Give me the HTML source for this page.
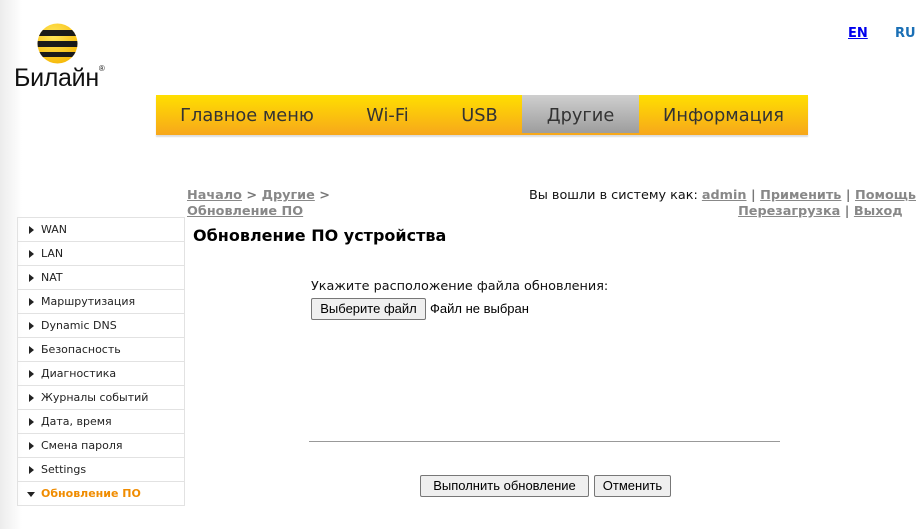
<!DOCTYPE html><html><head><meta charset="utf-8"><style>
body{margin:0;width:921px;height:529px;position:relative;background:#fff;font-family:"DejaVu Sans","Liberation Sans",sans-serif;overflow:hidden}
.lg{position:absolute;left:0;top:0;width:22px;height:529px;background:linear-gradient(90deg,#ececec,#fff)}
.a{position:absolute}
.menu{left:156px;top:95px;width:652px;height:40px;background:linear-gradient(#ffdf00,#f7a71b);box-shadow:0 2px 1px #ddd}
.tab{position:absolute;top:0;height:40px;line-height:42px;text-align:center;font-size:17.8px;color:#333}
.side{left:17px;top:217px;width:166px;border:1px solid #e2e2e2;border-bottom:none}
.side div{height:23px;border-bottom:1px solid #e2e2e2;font-size:11px;line-height:23px;color:#222;padding-left:23px;position:relative}
.side div:before{content:"";position:absolute;left:11px;top:8px;border-left:5px solid #222;border-top:4px solid transparent;border-bottom:4px solid transparent}
.side div.on{color:#f08c00;font-weight:bold}
.side div.on:before{left:9px;top:10px;border-top:5px solid #222;border-left:4px solid transparent;border-right:4px solid transparent;border-bottom:none}
.bc{font-size:12.8px;font-weight:bold;color:#777}
.bc u{color:#888}
.btn{position:absolute;font-family:"Liberation Sans",sans-serif;font-size:13px;background:#efefef;border:1px solid #777;border-radius:2px;height:20px;line-height:20px;text-align:center;color:#000}
</style></head><body>
<div class="lg"></div>
<svg class="a" style="left:37px;top:23px" width="41" height="41" viewBox="0 0 41 41"><defs><clipPath id="c"><circle cx="20.5" cy="20.5" r="20"/></clipPath><radialGradient id="g" cx=".4" cy=".3" r=".8"><stop offset="0" stop-color="#ffe65a"/><stop offset="1" stop-color="#f5b400"/></radialGradient></defs><g clip-path="url(#c)"><rect width="41" height="41" fill="url(#g)"/><rect y="7" width="41" height="6" fill="#1a1a1a"/><rect y="18" width="41" height="6" fill="#1a1a1a"/><rect y="29" width="41" height="5" fill="#1a1a1a"/></g></svg>
<div class="a" style="left:14px;top:64px;font-size:25px;font-family:'Liberation Sans',sans-serif;color:#111;letter-spacing:-0.3px">Билайн<span style="font-size:8px;vertical-align:top">®</span></div>
<div class="a" style="left:848px;top:26px;font-size:13px;font-weight:bold;color:#0000ee;text-decoration:underline">EN</div>
<div class="a" style="left:895px;top:26px;font-size:13px;font-weight:bold;color:#1a6fb5">RU</div>
<div class="a menu">
<div class="tab" style="left:0;width:182px">Главное меню</div>
<div class="tab" style="left:182px;width:99px">Wi-Fi</div>
<div class="tab" style="left:281px;width:85px">USB</div>
<div class="tab" style="left:366px;width:117px;background:linear-gradient(#cfcfcf,#9d9d9d);height:38px">Другие</div>
<div class="tab" style="left:483px;width:169px">Информация</div>
</div>
<div class="a bc" style="left:187px;top:188px;line-height:16px"><u>Начало</u> &gt; <u>Другие</u> &gt;<br><u>Обновление ПО</u></div>
<div class="a bc" style="right:5px;top:188px;line-height:16px;text-align:right"><span style="color:#111;font-weight:normal">Вы вошли в систему как: </span><u>admin</u> | <u>Применить</u> | <u>Помощь</u><br><u>Перезагрузка</u> | <u>Выход</u>&nbsp;&nbsp;&nbsp;</div>
<div class="a" style="left:193px;top:226px;font-size:16px;font-weight:bold;color:#000">Обновление ПО устройства</div>
<div class="a side">
<div>WAN</div><div>LAN</div><div>NAT</div><div>Маршрутизация</div><div>Dynamic DNS</div><div>Безопасность</div><div>Диагностика</div><div>Журналы событий</div><div>Дата, время</div><div>Смена пароля</div><div>Settings</div><div class="on">Обновление ПО</div>
</div>
<div class="a" style="left:311px;top:279px;font-size:12.8px;font-family:'DejaVu Sans',sans-serif;color:#111">Укажите расположение файла обновления:</div>
<div class="btn" style="left:311px;top:298px;width:113px">Выберите файл</div>
<div class="a" style="left:430px;top:301px;font-size:13px;font-family:'Liberation Sans',sans-serif">Файл не выбран</div>
<div class="a" style="left:309px;top:441px;width:471px;height:1px;background:#999"></div>
<div class="btn" style="left:420px;top:475px;width:167px">Выполнить обновление</div>
<div class="btn" style="left:594px;top:475px;width:75px">Отменить</div>
</body></html>
